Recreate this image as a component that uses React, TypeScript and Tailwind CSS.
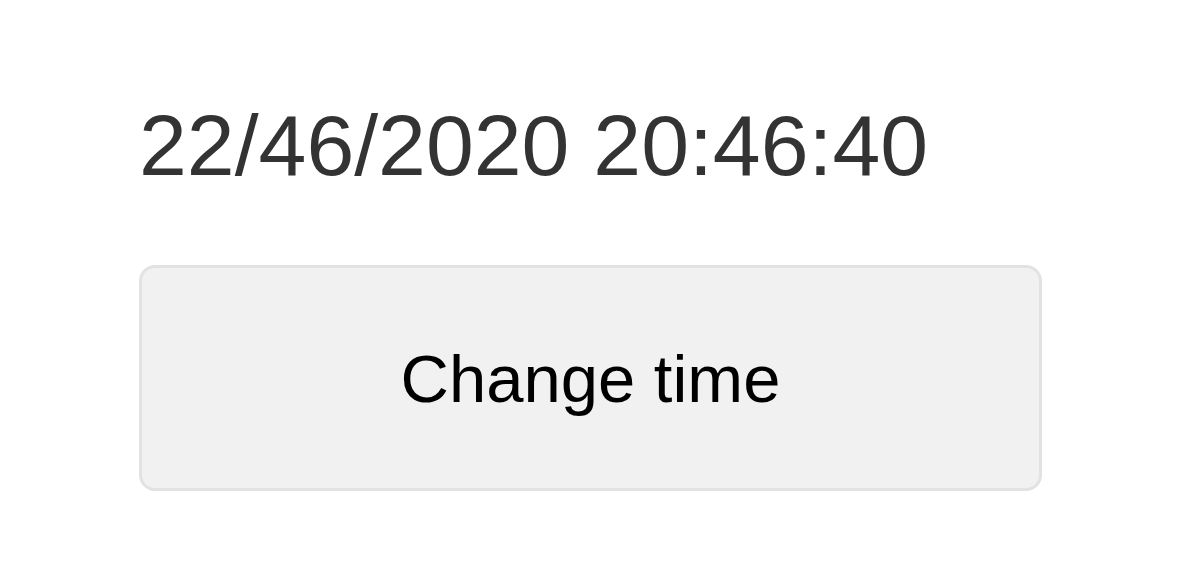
const App = () => {
  return (
    <div
      className="min-h-screen bg-white pl-[139px] pt-[102px]"
      style={{ fontFamily: '"Liberation Sans", Arial, sans-serif' }}
    >
      <div className="text-[86px] leading-none text-[#333333]">22/46/2020 20:46:40</div>

      <button className="mt-[77px] flex h-[226px] w-[903px] items-center justify-center rounded-[16px] border-[3px] border-[#e2e2e2] bg-[#f1f1f1] text-[67px] leading-none text-black">
        Change time
      </button>
    </div>
  );
};

export default App;
